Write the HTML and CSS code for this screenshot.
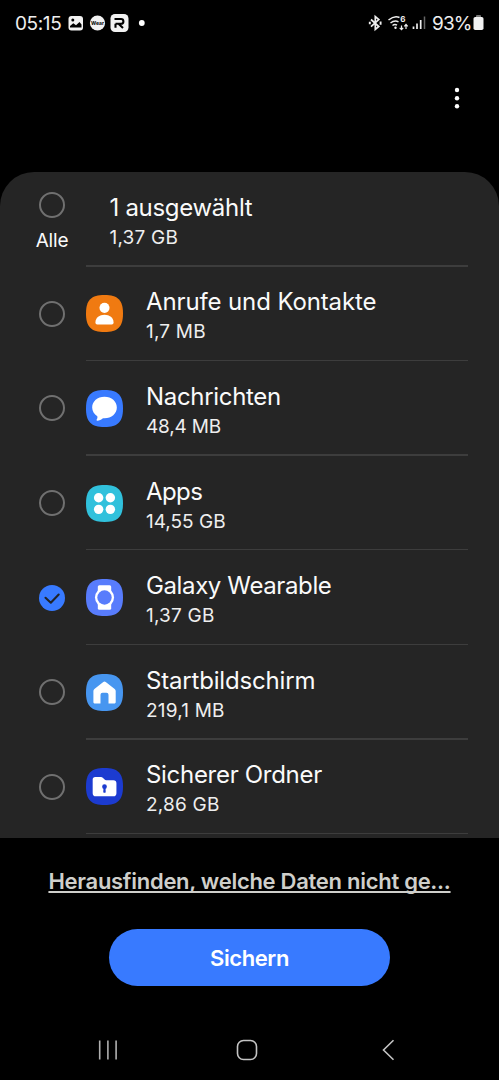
FILE: index.html
```html
<!DOCTYPE html>
<html lang="de">
<head>
<meta charset="utf-8">
<title>Daten sichern</title>
<link rel="stylesheet" href="styles.css">
</head>
<body>
<div class="screen">
  <header class="status">
    <span class="clock">05:15</span>
    <svg class="notif" width="80" height="20" viewBox="0 0 80 20">
      <rect x="0.500" y="3" width="14.500" height="14.500" rx="3" fill="#f2f2f2"/>
      <circle cx="4.800" cy="7" r="1.500" fill="#000"/>
      <path d="M2 14.500V13l3.300-2.800 2.700 2L11.500 9l2 2.500v3z" fill="#000"/>
      <circle cx="29.500" cy="10" r="7.600" fill="#f2f2f2"/>
      <text class="wear" x="29.500" y="12" text-anchor="middle">Wear</text>
      <rect x="42.500" y="1" width="18" height="18" rx="4.500" fill="#f2f2f2"/>
      <path d="M46.500 6h6.500a2.300 2.300 0 0 1 0 4.800h-5.500M47.500 10.800v4M50.500 10.800l4.500 4.200" fill="none" stroke="#000" stroke-width="2.100"/>
      <circle cx="73.800" cy="10" r="2.900" fill="#fff"/>
    </svg>
    <svg class="radios" width="60" height="20" viewBox="0 0 60 20">
      <g fill="none" stroke="#eee" stroke-width="1.700">
        <path d="M3 6.500 10.800 13.500 7.300 16.500V3.500L10.800 6.500 3 13.700"/>
        <path d="M1.800 8.800v2.400M12.600 8.500v3.200" stroke-width="1.900"/>
        <path d="M20.500 7q6-5 11-2.500M22.500 10q4-3.300 8-1.200M24.500 12.500q2.300-1.700 4.500-.3" stroke-width="1.500"/>
        <path d="M33.500 12.500v4M31.700 14.800l1.800 1.900 1.700-1.900M38 16V11.500M36.300 13.400 38 11.500l1.700 1.900" stroke-width="1.200"/>
      </g>
      <circle cx="27.500" cy="14.700" r="1.200" fill="#eee"/>
      <text class="six" x="32.300" y="9">6</text>
      <path d="M45.500 16v-2.500M49 16v-5.500M52.700 16V7" stroke="#eee" stroke-width="1.700"/>
      <path d="M56.500 16V3.500" stroke="#666" stroke-width="1.500"/>
    </svg>
    <span class="percent">93%</span>
    <svg class="battery" width="11" height="16" viewBox="0 0 11 16">
      <rect x="3" y="0" width="5" height="3" rx="1" fill="#777"/>
      <rect x=".5" y="2" width="10" height="13" rx="1.800" fill="#f2f2f2"/>
    </svg>
  </header>

  <div class="toolbar">
    <svg width="8" height="24" viewBox="0 0 8 24" fill="#fff"><circle cx="4" cy="4" r="2.200"/><circle cx="4" cy="12.200" r="2.200"/><circle cx="4" cy="20.300" r="2.200"/></svg>
  </div>

  <main class="panel">
    <section class="row summary">
      <div class="all"><span class="radio"></span><span class="all-label">Alle</span></div>
      <div class="text"><div class="title t-sel">1 ausgewählt</div><div class="size s-gb">1,37 GB</div></div>
    </section>

    <section class="row">
      <span class="radio"></span>
      <svg class="icon" viewBox="0 0 36 36"><path class="orange" d="M18 0C31 0 36 5 36 18S31 36 18 36 0 31 0 18 5 0 18 0z"/><circle cx="18" cy="12.500" r="4.900" fill="#fff"/><path d="M9.200 26.500c0-4.500 4-7.300 8.800-7.300s8.800 2.800 8.800 7.300c0 1.500-.6 2.100-1.800 2.100H11c-1.200 0-1.800-.6-1.800-2.100z" fill="#fff"/></svg>
      <div class="text"><div class="title t-calls">Anrufe und Kontakte</div><div class="size s-gb">1,7 MB</div></div>
    </section>

    <section class="row">
      <span class="radio"></span>
      <svg class="icon" viewBox="0 0 36 36"><path class="blue" d="M18 0C31 0 36 5 36 18S31 36 18 36 0 31 0 18 5 0 18 0z"/><path d="M18 6.500c6.900 0 12 4.600 12 10.500s-5.100 10.500-12 10.500l-1.500-.1c-1.500 1.300-3.700 2.200-5.600 2.400-.6 0-.8-.5-.5-1 .7-1 .9-2.100.6-3.300C8 23.600 6 20.500 6 17 6 11.100 11.100 6.500 18 6.500z" fill="#fff"/></svg>
      <div class="text"><div class="title t-msg">Nachrichten</div><div class="size s-msg">48,4 MB</div></div>
    </section>

    <section class="row">
      <span class="radio"></span>
      <svg class="icon" viewBox="0 0 36 36"><path class="cyan" d="M18 0C31 0 36 5 36 18S31 36 18 36 0 31 0 18 5 0 18 0z"/><g fill="#fff"><circle cx="12.300" cy="12.400" r="4.600"/><circle cx="23.700" cy="12.400" r="4.600"/><circle cx="12.300" cy="23.700" r="4.600"/><circle cx="23.700" cy="23.700" r="4.600"/></g></svg>
      <div class="text"><div class="title t-apps">Apps</div><div class="size">14,55 GB</div></div>
    </section>

    <section class="row">
      <span class="radio checked"><svg width="26" height="26" viewBox="0 0 26 26"><path d="M6.500 12.800 11.800 17.700 19.700 9.500" fill="none" stroke="#202328" stroke-width="2.100" stroke-linecap="round" stroke-linejoin="round"/></svg></span>
      <svg class="icon" viewBox="0 0 36 36"><path class="indigo" d="M18 0C31 0 36 5 36 18S31 36 18 36 0 31 0 18 5 0 18 0z"/><rect x="11.500" y="6" width="13" height="24" rx="1.500" fill="#fff"/><circle cx="18" cy="18" r="9.300" fill="#fff"/><circle class="indigo" cx="18" cy="18" r="7"/></svg>
      <div class="text"><div class="title t-wear">Galaxy Wearable</div><div class="size s-gb">1,37 GB</div></div>
    </section>

    <section class="row">
      <span class="radio"></span>
      <svg class="icon" viewBox="0 0 36 36"><path class="sky" d="M18 0C31 0 36 5 36 18S31 36 18 36 0 31 0 18 5 0 18 0z"/><path d="M16.800 7.700q1.200-1 2.400 0l8.700 6.900q1 .8 1 2V27.600q0 1-1 1h-6v-8.300q0-2-2-2h-3.800q-2 0-2 2V28.600H8.200q-1 0-1-1V16.600q0-1.200 1-2z" fill="#fff"/></svg>
      <div class="text"><div class="title t-home">Startbildschirm</div><div class="size s-gb">219,1 MB</div></div>
    </section>

    <section class="row">
      <span class="radio"></span>
      <svg class="icon" viewBox="0 0 36 36"><path class="navy" d="M18 0C31 0 36 5 36 18S31 36 18 36 0 31 0 18 5 0 18 0z"/><path d="M9 8.800h5.600q1 0 1.700.7l1.800 1.800q.6.600 1.500.6h7q3 0 3 3v9.700q0 3-3 3H9.500q-3 0-3-3V11.300q0-2.500 2.500-2.500z" fill="#fff"/><circle class="navy" cx="18" cy="18.200" r="2.300"/><path class="navy" d="M17.100 18h1.800l.3 5.500q-1.200 1-2.400 0z"/></svg>
      <div class="text"><div class="title t-safe">Sicherer Ordner</div><div class="size s-gb">2,86 GB</div></div>
    </section>
  </main>

  <footer class="actions">
    <a class="link">Herausfinden, welche Daten nicht ge...</a>
    <button class="save">Sichern</button>
  </footer>

  <nav class="nav">
    <svg width="20" height="20" viewBox="0 0 20 20"><path d="M1.700.5v19M9.900.5v19M18.100.5v19" stroke="#b0b0b0" stroke-width="1.600"/></svg>
    <svg class="home" width="22" height="22" viewBox="0 0 22 22"><rect x="1.500" y="1.500" width="19" height="19" rx="6" fill="none" stroke="#c4c4c4" stroke-width="1.600"/></svg>
    <svg width="14" height="22" viewBox="0 0 14 22"><path d="M12.500 1.300 2.500 11l10 9.700" fill="none" stroke="#c4c4c4" stroke-width="1.600"/></svg>
  </nav>
</div>
</body>
</html>
```
FILE: styles.css
```css
* { box-sizing: border-box; }
body { margin: 0; background: #000; color: #fafafa; font-family: Inter, Roboto, sans-serif; }
.screen { width: 499px; height: 1080px; overflow: hidden; display: flex; flex-direction: column; }
.status { height: 46px; display: flex; align-items: center; padding: 0 15px 0 15px; color: #eee; }
.clock, .percent { font-size: 19px; line-height: 24px; padding-top: 1px; white-space: nowrap; }
.clock { width: 53px; letter-spacing: -0.4px; }
.wear { font-size: 5px; font-weight: 700; fill: #000; }
.six { font-size: 8px; font-weight: 700; fill: #eee; }
.radios { margin-left: auto; }
.percent { width: 39px; margin-left: 4px; letter-spacing: -0.9px; }
.battery { margin-left: 2px; }
.toolbar { height: 126px; display: flex; justify-content: flex-end; align-items: flex-start; padding: 40px 38px 0 0; }
.panel { height: 666px; flex: none; background: #252525; border-radius: 34px 34px 0 0; overflow: hidden; padding-right: 31px; }
.row { height: 94.6px; display: flex; align-items: center; padding-left: 39px; position: relative; }
.row::after { content: ""; position: absolute; left: 86px; right: 0; bottom: 0; height: 1.4px; background: #3d3d3d; }
.radio { width: 26px; height: 26px; flex: none; border: 2px solid #707070; border-radius: 50%; }
.checked { border: 0; background: #387aff; }
.checked svg { display: block; }
.icon { width: 37px; height: 37px; margin-left: 21px; flex: none; }
.text { margin-left: 23px; padding-top: 5px; display: flex; flex-direction: column; gap: 2px; }
.title { font-size: 24px; line-height: 30px; white-space: nowrap; }
.size { font-size: 19px; line-height: 26px; white-space: nowrap; color: #eee; }
.t-sel { letter-spacing: -0.3px; }
.t-calls { letter-spacing: -0.12px; }
.t-msg { letter-spacing: -0.32px; }
.t-apps { letter-spacing: -0.6px; }
.t-wear { letter-spacing: -0.38px; }
.t-home { letter-spacing: -0.18px; }
.t-safe { letter-spacing: -0.3px; }
.s-gb { letter-spacing: 0.2px; }
.s-msg { letter-spacing: -0.2px; }
.summary { padding-left: 27px; }
.all { width: 50px; height: 58px; display: flex; flex-direction: column; align-items: center; gap: 10px; padding-top: 2px; }
.all-label { font-size: 19px; line-height: 25px; letter-spacing: -0.2px; }
.summary .text { margin-left: 32.5px; }
.orange { fill: #f07a11; }
.blue { fill: #387aff; }
.cyan { fill: #31c1dc; }
.indigo { fill: #587cfc; }
.sky { fill: #4796f0; }
.navy { fill: #1c3bd0; }
.actions { height: 182px; flex: none; display: flex; flex-direction: column; align-items: center; padding-top: 28px; }
.link { font-size: 22px; line-height: 30px; font-weight: 600; letter-spacing: -0.28px; color: #cfcfcb; white-space: nowrap; text-decoration: underline; text-decoration-thickness: 1.6px; text-underline-offset: 2px; text-decoration-skip-ink: none; }
.save { margin-top: 33px; width: 281px; height: 57px; border: 0; border-radius: 29px; background: #387aff; color: #fff; font: 600 22px/30px Inter, Roboto, sans-serif; letter-spacing: -0.4px; }
.nav { height: 60px; display: flex; align-items: center; justify-content: space-between; padding: 0 104px 0 98px; }
.home { margin-right: 5px; }
```
